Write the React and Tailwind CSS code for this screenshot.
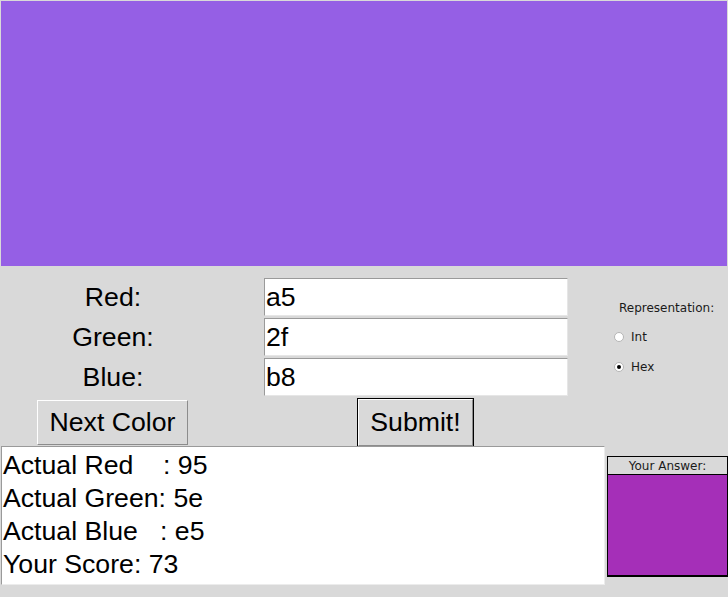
import React, { useState } from 'react';

const big = "font-['Liberation_Sans',Arial,sans-serif] text-[26.67px] leading-none text-black";
const small = "font-['DejaVu_Sans',sans-serif] text-[12px] leading-none text-[#1a1a1a]";

function Entry({ value }) {
    return (
        <div className="h-[38px] w-[304px] bg-white border-t border-l border-t-[#9a9a9a] border-l-[#9a9a9a] border-b border-r border-b-[#e6e6e6] border-r-[#e6e6e6] flex items-center pl-[1px]">
            <span className={big}>{value}</span>
        </div>
    );
}

function Radio({ label, checked }) {
    return (
        <div className="flex items-center gap-[7px] h-[14px]">
            <span className="w-[10px] h-[10px] rounded-full bg-white border border-[#b5b5b5] flex items-center justify-center">
                {checked && <span className="w-[4px] h-[4px] rounded-full bg-black" />}
            </span>
            <span className={small}>{label}</span>
        </div>
    );
}

const App = () => {
    const [rep] = useState('hex');
    const fields = [
        { label: 'Red:', value: 'a5' },
        { label: 'Green:', value: '2f' },
        { label: 'Blue:', value: 'b8' },
    ];

    return (
        <div className="w-[728px] h-[597px] bg-[#d9d9d9] overflow-hidden flex flex-col">
            {/* colour canvas */}
            <div className="mx-[1px] mt-[1px] h-[265px] bg-[#955fe5]" />

            <div className="flex h-[180px]">
                <div className="flex flex-col pt-[12px] gap-[2px]">
                    {fields.map((f) => (
                        <div key={f.label} className="flex h-[38px] items-center">
                            <div className="w-[226px] flex justify-center">
                                <span className={big}>{f.label}</span>
                            </div>
                            <div className="ml-[38px]">
                                <Entry value={f.value} />
                            </div>
                        </div>
                    ))}
                    <div className="flex h-[50px] items-start">
                        <div className="w-[226px] flex pl-[37px] pt-[2px]">
                            <button className="w-[151px] h-[45px] bg-[#d9d9d9] border border-t-white border-l-white border-b-[#8c8c8c] border-r-[#8c8c8c] flex items-center justify-center">
                                <span className={big}>Next Color</span>
                            </button>
                        </div>
                        <div className="ml-[38px] w-[304px] flex pl-[93px]">
                            <div className="border border-black">
                                <button className="w-[115px] h-[47px] bg-[#d9d9d9] border border-t-white border-l-white border-b-[#8c8c8c] border-r-[#8c8c8c] flex items-center justify-center">
                                    <span className={big}>Submit!</span>
                                </button>
                            </div>
                        </div>
                    </div>
                </div>

                <div className="ml-[46px] flex flex-col pt-[36px]">
                    <span className={`${small} ml-[5px]`}>Representation:</span>
                    <div className="mt-[16px] flex flex-col gap-[16px]">
                        <Radio label="Int" checked={rep === 'int'} />
                        <Radio label="Hex" checked={rep === 'hex'} />
                    </div>
                </div>
            </div>

            <div className="flex items-start">
                <div className="ml-[1px] w-[604px] h-[139px] bg-white border-t border-l border-t-[#9a9a9a] border-l-[#9a9a9a] border-b border-r border-b-[#ececec] border-r-[#ececec] pl-[1px] pt-[5px] flex flex-col">
                    {['Actual Red    : 95', 'Actual Green: 5e', 'Actual Blue   : e5', 'Your Score: 73'].map((line) => (
                        <div key={line} className={`${big} h-[33.7px] whitespace-pre leading-[26px]`}>{line}</div>
                    ))}
                </div>
                <div className="ml-[2px] mt-[10px] w-[121px] h-[121px] border border-black border-b-2 flex flex-col">
                    <div className="h-[18px] border-b border-black flex items-center justify-center">
                        <span className={small}>Your Answer:</span>
                    </div>
                    <div className="flex-1 bg-[#a52fb8]" />
                </div>
            </div>
        </div>
    );
};

export default App;
